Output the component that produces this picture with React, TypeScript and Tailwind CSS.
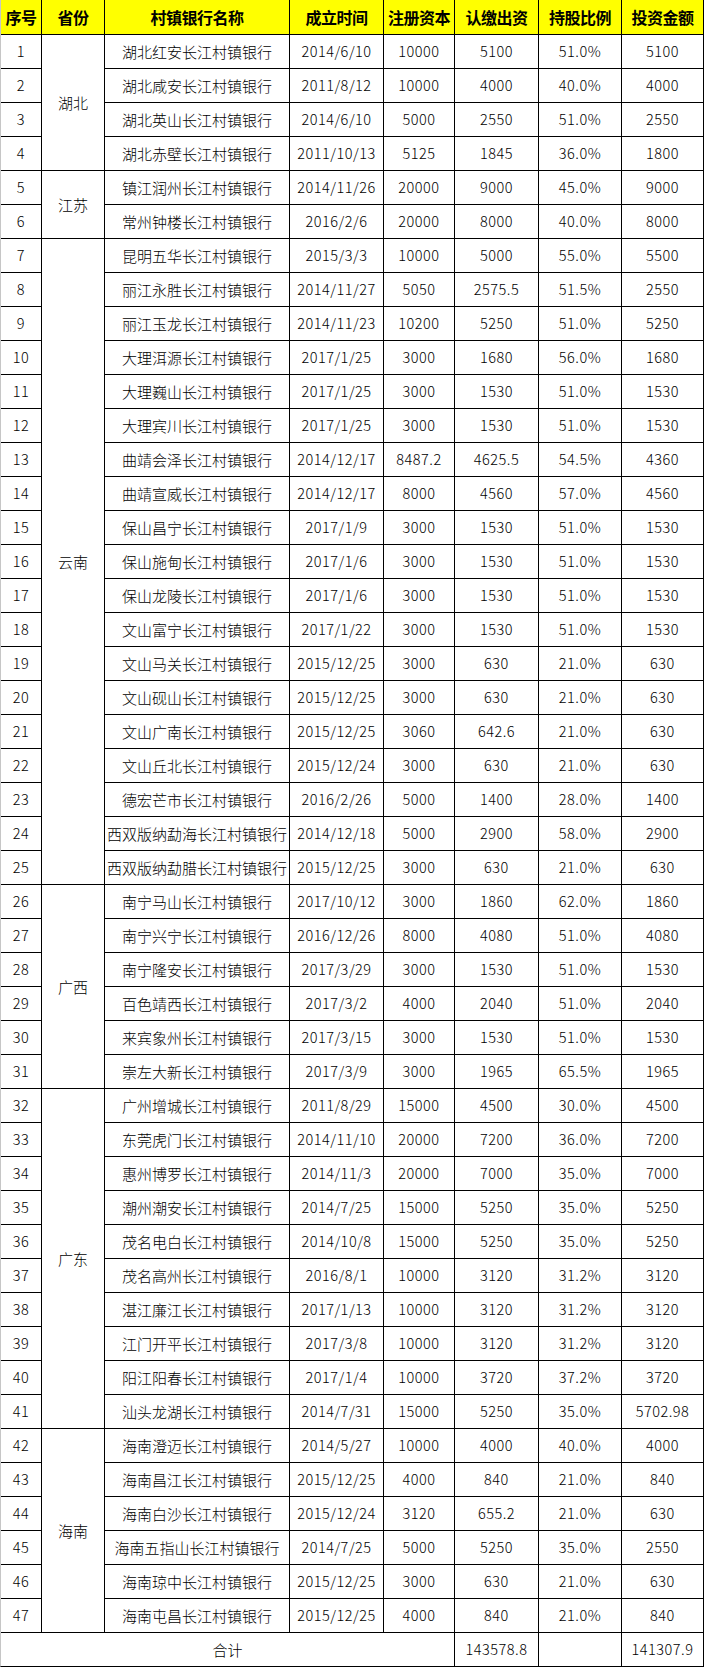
import React from 'react';

type Row = [string, string, string, string, string, string];

// 省份分组：名称 + 跨行数 + 行数据
const groups: { province: string; span: string; rows: Row[] }[] = [
  {
    province: '湖北',
    span: 'row-span-4',
    rows: [
      ['湖北红安长江村镇银行', '2014/6/10', '10000', '5100', '51.0%', '5100'],
      ['湖北咸安长江村镇银行', '2011/8/12', '10000', '4000', '40.0%', '4000'],
      ['湖北英山长江村镇银行', '2014/6/10', '5000', '2550', '51.0%', '2550'],
      ['湖北赤壁长江村镇银行', '2011/10/13', '5125', '1845', '36.0%', '1800'],
    ],
  },
  {
    province: '江苏',
    span: 'row-span-2',
    rows: [
      ['镇江润州长江村镇银行', '2014/11/26', '20000', '9000', '45.0%', '9000'],
      ['常州钟楼长江村镇银行', '2016/2/6', '20000', '8000', '40.0%', '8000'],
    ],
  },
  {
    province: '云南',
    span: 'row-span-19',
    rows: [
      ['昆明五华长江村镇银行', '2015/3/3', '10000', '5000', '55.0%', '5500'],
      ['丽江永胜长江村镇银行', '2014/11/27', '5050', '2575.5', '51.5%', '2550'],
      ['丽江玉龙长江村镇银行', '2014/11/23', '10200', '5250', '51.0%', '5250'],
      ['大理洱源长江村镇银行', '2017/1/25', '3000', '1680', '56.0%', '1680'],
      ['大理巍山长江村镇银行', '2017/1/25', '3000', '1530', '51.0%', '1530'],
      ['大理宾川长江村镇银行', '2017/1/25', '3000', '1530', '51.0%', '1530'],
      ['曲靖会泽长江村镇银行', '2014/12/17', '8487.2', '4625.5', '54.5%', '4360'],
      ['曲靖宣威长江村镇银行', '2014/12/17', '8000', '4560', '57.0%', '4560'],
      ['保山昌宁长江村镇银行', '2017/1/9', '3000', '1530', '51.0%', '1530'],
      ['保山施甸长江村镇银行', '2017/1/6', '3000', '1530', '51.0%', '1530'],
      ['保山龙陵长江村镇银行', '2017/1/6', '3000', '1530', '51.0%', '1530'],
      ['文山富宁长江村镇银行', '2017/1/22', '3000', '1530', '51.0%', '1530'],
      ['文山马关长江村镇银行', '2015/12/25', '3000', '630', '21.0%', '630'],
      ['文山砚山长江村镇银行', '2015/12/25', '3000', '630', '21.0%', '630'],
      ['文山广南长江村镇银行', '2015/12/25', '3060', '642.6', '21.0%', '630'],
      ['文山丘北长江村镇银行', '2015/12/24', '3000', '630', '21.0%', '630'],
      ['德宏芒市长江村镇银行', '2016/2/26', '5000', '1400', '28.0%', '1400'],
      ['西双版纳勐海长江村镇银行', '2014/12/18', '5000', '2900', '58.0%', '2900'],
      ['西双版纳勐腊长江村镇银行', '2015/12/25', '3000', '630', '21.0%', '630'],
    ],
  },
  {
    province: '广西',
    span: 'row-span-6',
    rows: [
      ['南宁马山长江村镇银行', '2017/10/12', '3000', '1860', '62.0%', '1860'],
      ['南宁兴宁长江村镇银行', '2016/12/26', '8000', '4080', '51.0%', '4080'],
      ['南宁隆安长江村镇银行', '2017/3/29', '3000', '1530', '51.0%', '1530'],
      ['百色靖西长江村镇银行', '2017/3/2', '4000', '2040', '51.0%', '2040'],
      ['来宾象州长江村镇银行', '2017/3/15', '3000', '1530', '51.0%', '1530'],
      ['崇左大新长江村镇银行', '2017/3/9', '3000', '1965', '65.5%', '1965'],
    ],
  },
  {
    province: '广东',
    span: 'row-span-10',
    rows: [
      ['广州增城长江村镇银行', '2011/8/29', '15000', '4500', '30.0%', '4500'],
      ['东莞虎门长江村镇银行', '2014/11/10', '20000', '7200', '36.0%', '7200'],
      ['惠州博罗长江村镇银行', '2014/11/3', '20000', '7000', '35.0%', '7000'],
      ['潮州潮安长江村镇银行', '2014/7/25', '15000', '5250', '35.0%', '5250'],
      ['茂名电白长江村镇银行', '2014/10/8', '15000', '5250', '35.0%', '5250'],
      ['茂名高州长江村镇银行', '2016/8/1', '10000', '3120', '31.2%', '3120'],
      ['湛江廉江长江村镇银行', '2017/1/13', '10000', '3120', '31.2%', '3120'],
      ['江门开平长江村镇银行', '2017/3/8', '10000', '3120', '31.2%', '3120'],
      ['阳江阳春长江村镇银行', '2017/1/4', '10000', '3720', '37.2%', '3720'],
      ['汕头龙湖长江村镇银行', '2014/7/31', '15000', '5250', '35.0%', '5702.98'],
    ],
  },
  {
    province: '海南',
    span: 'row-span-6',
    rows: [
      ['海南澄迈长江村镇银行', '2014/5/27', '10000', '4000', '40.0%', '4000'],
      ['海南昌江长江村镇银行', '2015/12/25', '4000', '840', '21.0%', '840'],
      ['海南白沙长江村镇银行', '2015/12/24', '3120', '655.2', '21.0%', '630'],
      ['海南五指山长江村镇银行', '2014/7/25', '5000', '5250', '35.0%', '2550'],
      ['海南琼中长江村镇银行', '2015/12/25', '3000', '630', '21.0%', '630'],
      ['海南屯昌长江村镇银行', '2015/12/25', '4000', '840', '21.0%', '840'],
    ],
  },
];

const headers = ['序号', '省份', '村镇银行名称', '成立时间', '注册资本', '认缴出资', '持股比例', '投资金额'];

const cell = 'flex items-center justify-center bg-white whitespace-nowrap font-light';
const num = 'text-[14.5px] tracking-[0.5px] tabular-nums';

export default function App() {
  let idx = 0;

  return (
    <div className='w-[705px] bg-white font-["Noto_Sans_CJK_SC",sans-serif] text-[15px] leading-none text-black'>
      <div className="grid w-fit grid-cols-[40px_62px_184px_93px_70px_83px_82px_81px] grid-rows-[34px_repeat(48,33px)] gap-px border-r border-b border-l border-r-black border-b-black border-l-[#c6c6c6] bg-black">
        {headers.map((h) => (
          <div key={h} className="flex items-center justify-center whitespace-nowrap bg-[#ffff00] text-[16px] font-bold tracking-[-0.5px]">
            {h}
          </div>
        ))}

        {groups.map((g) =>
          g.rows.map((r, i) => {
            idx += 1;
            return (
              <React.Fragment key={idx}>
                <div className={`${cell} ${num}`}>{idx}</div>
                {i === 0 && <div className={`${cell} ${g.span}`}>{g.province}</div>}
                <div className={cell}>{r[0]}</div>
                {r.slice(1).map((v, j) => (
                  <div key={j} className={`${cell} ${num}`}>
                    {v}
                  </div>
                ))}
              </React.Fragment>
            );
          })
        )}

        {/* 合计 */}
        <div className={`${cell} col-span-5`}>合计</div>
        <div className={`${cell} ${num}`}>143578.8</div>
        <div className={cell}></div>
        <div className={`${cell} ${num}`}>141307.9</div>
      </div>
    </div>
  );
}
